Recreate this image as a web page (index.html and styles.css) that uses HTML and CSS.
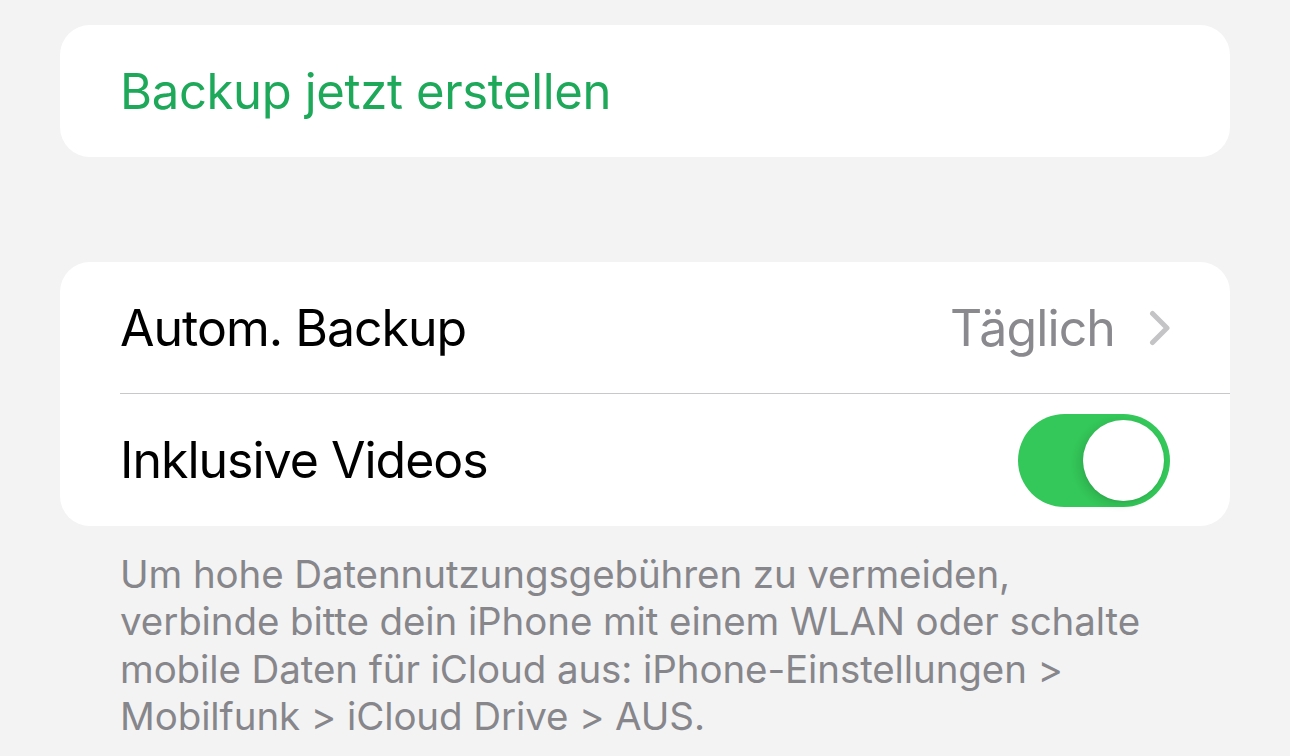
FILE: index.html
```html
<!DOCTYPE html>
<html lang="de">
<head>
<meta charset="utf-8">
<title>Backup</title>
<link rel="stylesheet" href="styles.css">
</head>
<body>
<main class="page">
  <section class="card card-action">
    <div class="row">
      <span class="action">Backup jetzt erstellen</span>
    </div>
  </section>

  <section class="card card-settings">
    <div class="row row-link">
      <span class="label">Autom. Backup</span>
      <span class="value">Täglich</span>
      <svg class="chevron" width="22" height="36" viewBox="0 0 22 36" aria-hidden="true">
        <polyline points="3.5,3.5 18,18 3.5,32.5" fill="none" stroke="#c4c4c7" stroke-width="5" stroke-linecap="round" stroke-linejoin="round"/>
      </svg>
    </div>
    <div class="separator"></div>
    <div class="row">
      <span class="label">Inklusive Videos</span>
      <span class="toggle is-on"><span class="knob"></span></span>
    </div>
  </section>

  <p class="footer">Um hohe Datennutzungsgebühren zu vermeiden,<br>verbinde bitte dein iPhone mit einem WLAN oder schalte<br>mobile Daten für iCloud aus: iPhone-Einstellungen &gt;<br>Mobilfunk &gt; iCloud Drive &gt; AUS.</p>
</main>
</body>
</html>
```

FILE: styles.css
```css
* { box-sizing: border-box; }

html, body {
  margin: 0;
  padding: 0;
  background: #f3f3f4;
  font-family: Inter, "Noto Sans", "Liberation Sans", sans-serif;
  -webkit-font-smoothing: antialiased;
}

.page {
  display: flex;
  flex-direction: column;
  padding: 25px 60px 0;
}

.card {
  background: #ffffff;
  border-radius: 30px;
  overflow: hidden;
}

.card-action .row {
  height: 132px;
}

.card-settings {
  margin-top: 105px;
}

.row {
  display: flex;
  align-items: center;
  height: 131px;
  padding: 0 61px 0 60px;
}

.card-settings .row:last-child {
  height: 132px;
}

.action {
  font-size: 49px;
  color: #1ea95a;
  letter-spacing: -0.35px;
}

.label {
  font-size: 50px;
  color: #000000;
  letter-spacing: -1px;
  flex: 1;
}

.value {
  font-size: 50px;
  color: #8a8a8e;
  letter-spacing: -0.9px;
  margin-right: 34px;
}

.chevron {
  display: block;
  margin-right: -2px;
}

.separator {
  height: 1px;
  background: #c8c8cb;
  margin-left: 60px;
}

.toggle {
  position: relative;
  width: 152px;
  height: 93px;
  border-radius: 47px;
  background: #34c759;
  margin-right: -1px;
}

.knob {
  position: absolute;
  top: 6px;
  right: 6px;
  width: 81px;
  height: 81px;
  border-radius: 50%;
  background: #ffffff;
  box-shadow: -4px 3px 10px rgba(0, 0, 0, 0.12), 0 1px 2px rgba(0, 0, 0, 0.06);
}

.footer {
  margin: 25px 0 0;
  padding: 0 60px;
  font-size: 38.5px;
  line-height: 47.3px;
  color: #86868b;
  letter-spacing: -0.1px;
}
```
